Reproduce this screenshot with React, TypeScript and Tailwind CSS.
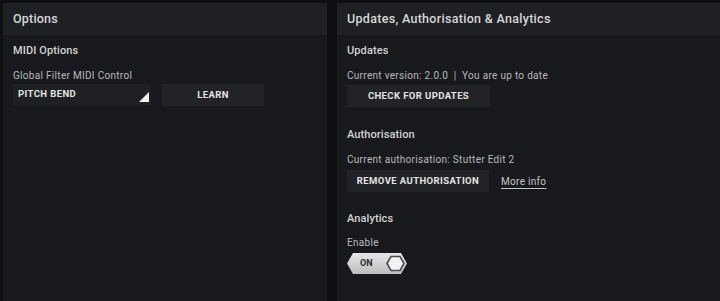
import React from "react";

const font = { fontFamily: "Roboto, 'Noto Sans', sans-serif" };

function Btn({ children, w }: { children: React.ReactNode; w: string }) {
  return (
    <div
      className={`${w} h-[22px] bg-[#222327] flex items-center justify-center text-[9.5px] font-bold tracking-[0.4px] text-[#e4e4e6]`}
    >
      {children}
    </div>
  );
}

function Title({ children }: { children: React.ReactNode }) {
  return <div className="h-[16px] leading-[16px] text-[11px] font-medium tracking-[0.1px] text-[#d2d3d5]">{children}</div>;
}

function Label({ children, className = "" }: { children: React.ReactNode; className?: string }) {
  return (
    <div className={`h-[14px] leading-[14px] text-[10px] tracking-[0.3px] text-[#b9babd] ${className}`}>{children}</div>
  );
}

function Toggle() {
  return (
    <div className="relative w-[60px] h-[21px]">
      <svg className="absolute inset-0" width="60" height="21" viewBox="0 0 60 21">
        <defs>
          <linearGradient id="tg" x1="0" y1="0" x2="0" y2="1">
            <stop offset="0" stopColor="#e6e6e6" />
            <stop offset="1" stopColor="#bdbdbd" />
          </linearGradient>
        </defs>
        <polygon points="0,10.5 6,0 54,0 60,10.5 54,21 6,21" fill="url(#tg)" />
        <polygon points="40,10.5 44,3.5 53,3.5 57,10.5 53,17.5 44,17.5" fill="#f2f2f2" stroke="#4a4b4f" strokeWidth="1.6" />
      </svg>
      <span className="absolute left-[13px] top-0 h-[21px] leading-[21px] text-[9px] font-bold text-[#2b2c30]">ON</span>
    </div>
  );
}

export default function App() {
  return (
    <div className="w-[720px] h-[301px] bg-[#0e0f11] flex pt-[3px] pl-[3px] gap-[10px] overflow-hidden" style={font}>
      <div className="w-[324px] flex flex-col bg-[#18191c]">
        <div className="h-[32px] bg-[#1f2024] flex items-center pl-[10px] text-[12.5px] font-medium tracking-[0.2px] text-[#d6d7d9]">
          Options
        </div>
        <div className="pl-[10px] pt-[8px] flex flex-col">
          <Title>MIDI Options</Title>
          <Label className="mt-[10px]">Global Filter MIDI Control</Label>
          <div className="mt-[1px] flex gap-[11px]">
            <div className="relative w-[138px] h-[21px] bg-[#1f2023] flex items-center pl-[5px] text-[9.5px] font-bold tracking-[0.4px] text-[#e4e4e6]">
              PITCH BEND
              <svg className="absolute right-[2px] top-[8px]" width="10" height="10" viewBox="0 0 10 10">
                <polygon points="10,0 10,10 0,10" fill="#f0f0f0" />
              </svg>
            </div>
            <Btn w="w-[102px]">LEARN</Btn>
          </div>
        </div>
      </div>
      <div className="flex-1 flex flex-col bg-[#18191c]">
        <div className="h-[32px] bg-[#1f2024] flex items-center pl-[10px] text-[12.5px] font-medium tracking-[0.3px] text-[#d6d7d9]">
          Updates, Authorisation &amp; Analytics
        </div>
        <div className="pl-[10px] pt-[8px] flex flex-col">
          <Title>Updates</Title>
          <Label className="mt-[10px]">Current version: 2.0.0 &nbsp;|&nbsp; You are up to date</Label>
          <div className="mt-[2px]">
            <Btn w="w-[143px]">CHECK FOR UPDATES</Btn>
          </div>
          <div className="mt-[20px]">
            <Title>Authorisation</Title>
          </div>
          <Label className="mt-[10px]">Current authorisation: Stutter Edit 2</Label>
          <div className="mt-[3px] flex items-center gap-[12px]">
            <Btn w="w-[142px]">REMOVE AUTHORISATION</Btn>
            <span className="text-[10px] tracking-[0.3px] text-[#c4c5c8] underline underline-offset-[3px] decoration-[#c4c5c8]">
              More info
            </span>
          </div>
          <div className="mt-[19px]">
            <Title>Analytics</Title>
          </div>
          <Label className="mt-[9px]">Enable</Label>
          <div className="mt-[3px]">
            <Toggle />
          </div>
        </div>
      </div>
    </div>
  );
}
